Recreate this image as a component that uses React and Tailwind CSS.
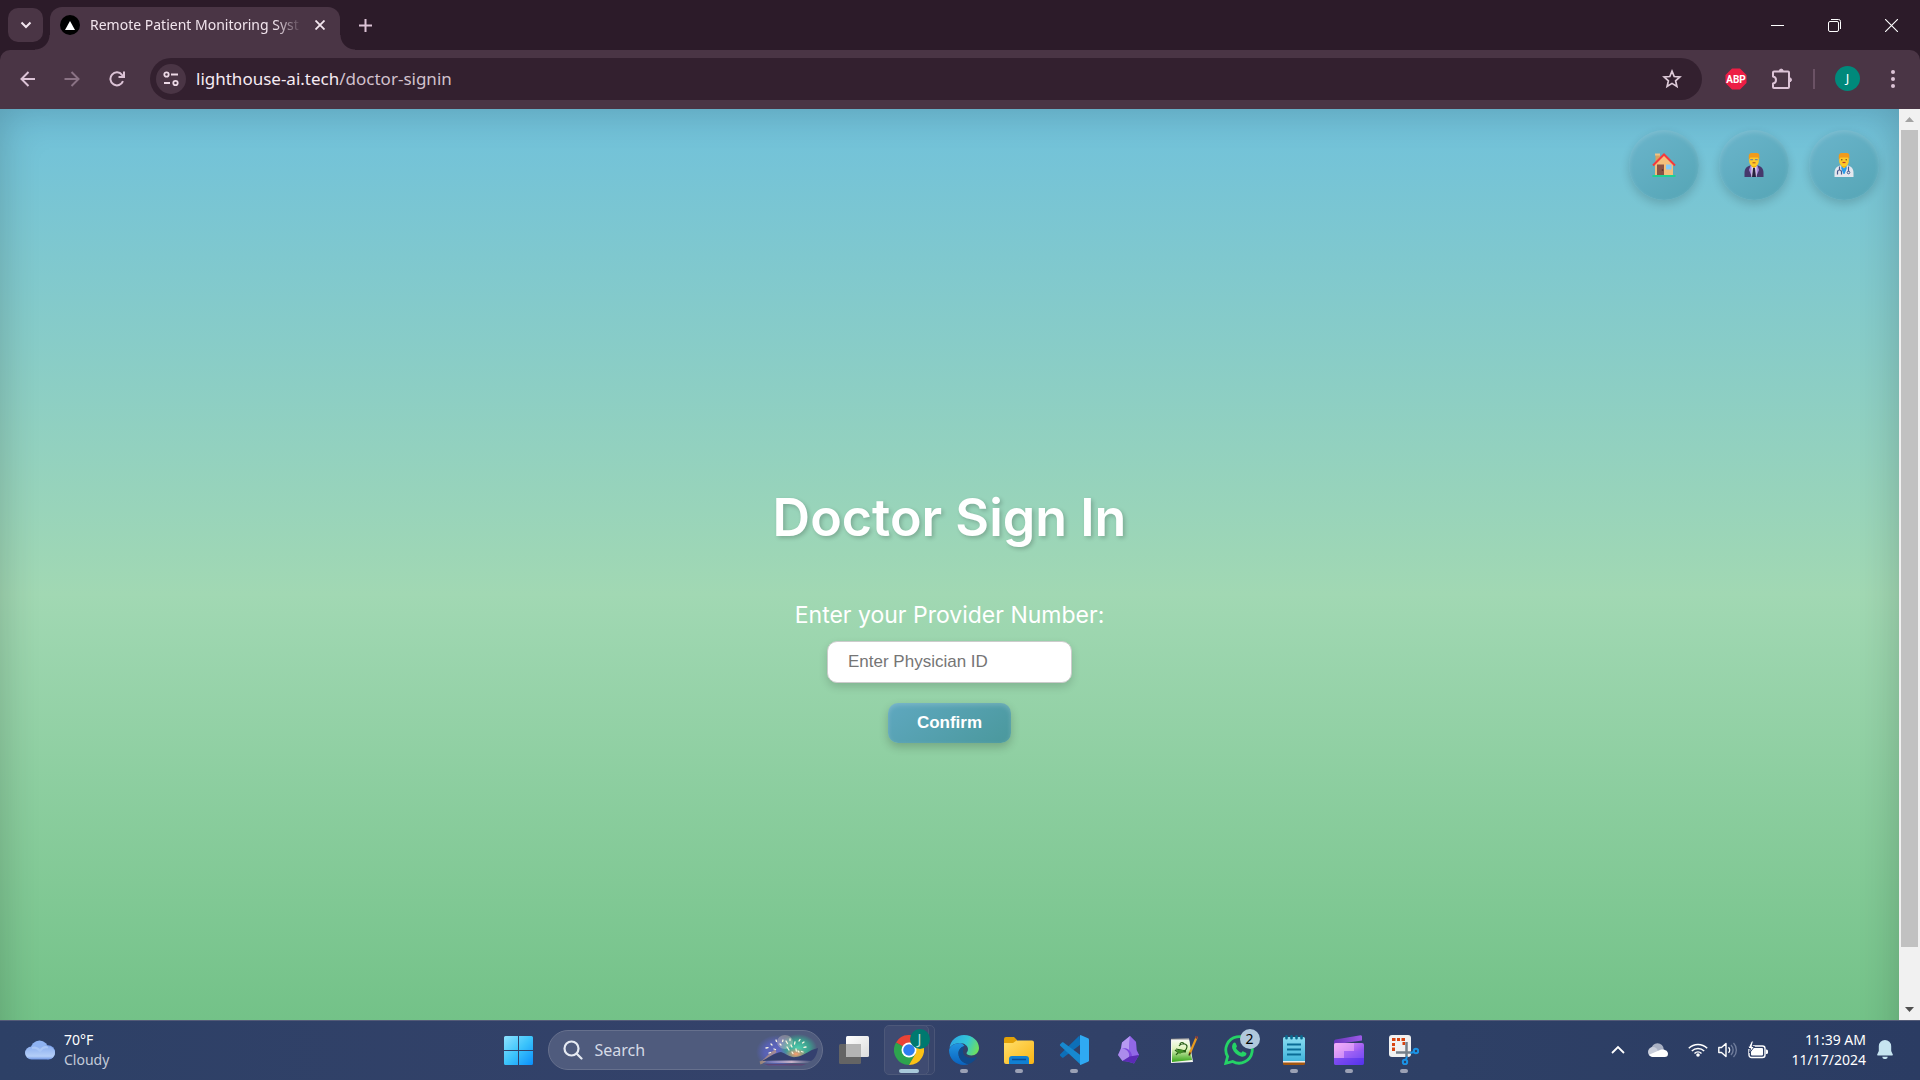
import React from "react";

const ui = "font-['Noto_Sans',sans-serif]";

/* ---------- Browser chrome icons ---------- */

const ChevronDown = () => (
  <svg width="12" height="12" viewBox="0 0 12 12" fill="none" stroke="#f3e6ef" strokeWidth="2">
    <path d="M1.500 3.500 6 8l4.500-4.500" />
  </svg>
);

const BackIcon = () => (
  <svg width="16" height="16" viewBox="0 0 16 16" fill="none" stroke="#dcc3d6" strokeWidth="2">
    <path d="M15 8H2M8.500 1 1.500 8l7 7" />
  </svg>
);

const ForwardIcon = () => (
  <svg width="16" height="16" viewBox="0 0 16 16" fill="none" stroke="#8a7284" strokeWidth="2">
    <path d="M.5 8H14M7.500 1l7 7-7 7" />
  </svg>
);

const ReloadIcon = () => (
  <svg width="16" height="16" viewBox="0 0 16 16" fill="none" stroke="#dcc3d6" strokeWidth="2">
    <path d="M14 10.200A6.500 6.500 0 1 1 13 3.800L14.600 5.600" />
    <path d="M15 .5V6H9.500" />
  </svg>
);

const SiteIcon = () => (
  <svg width="16" height="16" viewBox="0 0 16 16" fill="none" stroke="#ecd9e6" strokeWidth="1.800">
    <circle cx="3.500" cy="3.500" r="2.200" />
    <path d="M8 3.500h7M1 12h6" />
    <circle cx="12.500" cy="12" r="2.200" />
  </svg>
);

const StarIcon = () => (
  <svg width="20" height="20" viewBox="0 0 20 20" fill="none" stroke="#dfcbd9" strokeWidth="1.700">
    <path d="m10 2.200 2.200 5.300 5.700.5-4.300 3.800 1.300 5.600-4.900-3-4.900 3 1.300-5.600L2.100 8l5.700-.5z" />
  </svg>
);

const AbpIcon = () => (
  <svg width="22" height="22" viewBox="0 0 22 22">
    <path d="M7 .5h8L21.500 7v8L15 21.500H7L.5 15V7z" fill="#ed1e45" />
    <text x="11" y="14.500" textAnchor="middle" fontSize="10" fontWeight="700" fill="#fff" fontFamily="Roboto, sans-serif">
      ABP
    </text>
  </svg>
);

const PuzzleIcon = () => (
  <svg width="22" height="22" viewBox="0 0 22 22">
    <path
      d="M3 3.500h14a1 1 0 0 1 1 1V19a1 1 0 0 1-1 1H3a1 1 0 0 1-1-1v-3.500c2-.3 3-1.600 3-3.500s-1-3.200-3-3.500V4.500a1 1 0 0 1 1-1z"
      fill="none"
      stroke="#dcc3d6"
      strokeWidth="2"
      strokeLinejoin="round"
    />
    <path d="M8.300 3a1.900 1.900 0 0 1 3.800 0zM18.500 9.800a2 2 0 0 1 0 4z" fill="#dcc3d6" stroke="#dcc3d6" />
  </svg>
);

/* ---------- Page icons ---------- */

const HouseIcon = () => (
  <svg width="24" height="24" viewBox="0 0 24 24">
    <path d="M3.500 1h4.500v8H3.500z" fill="#d9a35f" />
    <path d="M3 .500h5v2H3z" fill="#f2c184" />
    <path d="M3 11 12 2l9 9v11H3z" fill="#f3bf7c" />
    <path d="M5 11.500h7V22H5z" fill="#8a5245" />
    <circle cx="10.500" cy="17" r=".8" fill="#4d2b25" />
    <path d="M14 11.500h5.500v5H14z" fill="#84cbf8" />
    <path d="M1 12.500 12 1.500l11 11" fill="none" stroke="#f5383c" strokeWidth="2" />
    <path d="M.5 22h23v2H.5z" fill="#1fd193" />
  </svg>
);

const OfficeWorkerIcon = () => (
  <svg width="24" height="24" viewBox="0 0 24 24">
    <path d="M2.500 24v-4c0-5 3-7 6-7.500h7c3 .5 6 2.500 6 7.500v4z" fill="#46386c" />
    <path d="M8.500 12.500h7L17 17l-3 7h-4l-3-7z" fill="#a383d8" />
    <path d="m9.500 12.500 2.500 3 2.500-3V24h-5z" fill="#e8e2f2" />
    <path d="M11 15h2l1 9h-4z" fill="#28213f" />
    <path d="M9.500 10.500h5v3L12 15l-2.500-1.500z" fill="#f0b400" />
    <path d="M7.200 3h9.600v5.500a4.800 4.800 0 0 1-9.600 0z" fill="#ffc928" />
    <path d="M6.800 6.500V3c0-1.800 1.200-3 3-3H15c1.500 0 2.300 1 2.300 2.500v4L16 4.500H8.500z" fill="#f09a1c" />
    <path d="M8.300 6.700h2.800M12.900 6.700h2.800" stroke="#7a8796" strokeWidth="1.300" />
    <path d="M10.500 9.800h3" stroke="#a34a28" />
  </svg>
);

const DoctorIcon = () => (
  <svg width="24" height="24" viewBox="0 0 24 24">
    <path d="M2.500 24v-4c0-5 3-7 6-7.500h7c3 .5 6 2.500 6 7.500v4z" fill="#e4e7ee" />
    <path d="m9.500 12.500 2.500 3 2.500-3 .3 3L12.500 21h-1L9.200 15.500z" fill="#2b9be8" />
    <path d="M9.500 10.500h5v3L12 15l-2.500-1.500z" fill="#f0b400" />
    <path d="M7.200 3h9.600v5.500a4.800 4.800 0 0 1-9.600 0z" fill="#ffc928" />
    <path d="M6.800 6.500V3c0-1.800 1.200-3 3-3H15c1.500 0 2.300 1 2.300 2.500v4L16 4.500H8.500z" fill="#f09a1c" />
    <circle cx="9.800" cy="6.800" r=".7" fill="#5d4326" />
    <circle cx="14.200" cy="6.800" r=".7" fill="#5d4326" />
    <path d="M10.500 9.500h3" stroke="#b33c28" strokeWidth="1.200" />
    <path d="M7.500 13.500v4M5.500 21.500v-2.500a2 2 0 0 1 4 0v2.500M16.500 13.500v5" fill="none" stroke="#48588c" strokeWidth="1.200" />
    <circle cx="16.500" cy="19.500" r="1.300" fill="none" stroke="#48588c" />
  </svg>
);

/* ---------- Taskbar icons ---------- */

const WeatherIcon = () => (
  <svg width="30" height="20" viewBox="0 0 30 20">
    <defs>
      <linearGradient id="wc" x1="0" y1="0" x2="0" y2="1">
        <stop offset="0" stopColor="#8db0f0" />
        <stop offset=".75" stopColor="#b4cef8" />
        <stop offset="1" stopColor="#6f96e4" />
      </linearGradient>
    </defs>
    <circle cx="14.500" cy="9.500" r="9" fill="#8fb3f2" />
    <circle cx="23" cy="12.200" r="7" fill="#7ea3eb" />
    <rect x="0" y="6.500" width="30" height="13" rx="6.500" fill="url(#wc)" />
    <path d="M7 8c3-1 6 .5 8 3 2-3 5-4.500 8-3.500" fill="none" stroke="#a9c6f6" strokeWidth="2" />
  </svg>
);

const StartIcon = () => (
  <svg width="29" height="29" viewBox="0 0 29 29">
    <defs>
      <linearGradient id="st" gradientUnits="userSpaceOnUse" x1="0" y1="0" x2="29" y2="29">
        <stop offset="0" stopColor="#8fe2ff" />
        <stop offset=".5" stopColor="#3cc4fb" />
        <stop offset="1" stopColor="#0a8ffb" />
      </linearGradient>
    </defs>
    <path
      d="M1.500 0H14v14H0V1.500A1.500 1.500 0 0 1 1.500 0zM15 0h12.500A1.500 1.500 0 0 1 29 1.500V14H15zM0 15h14v14H1.500A1.500 1.500 0 0 1 0 27.500zM15 15h14v12.500a1.500 1.500 0 0 1-1.500 1.500H15z"
      fill="url(#st)"
    />
  </svg>
);

const SearchIcon = () => (
  <svg width="20" height="20" viewBox="0 0 20 20" fill="none" stroke="#e6eaf2" strokeWidth="2.200">
    <circle cx="8.500" cy="8.500" r="7" />
    <path d="m13.500 13.500 5 5" strokeLinecap="round" />
  </svg>
);

const AuroraArt = () => (
  <svg width="64" height="32" viewBox="0 0 64 32">
    <defs>
      <radialGradient id="au1">
        <stop offset="0" stopColor="#6268c4" />
        <stop offset=".6" stopColor="#5a63c0" stopOpacity=".8" />
        <stop offset="1" stopColor="#5a63c0" stopOpacity="0" />
      </radialGradient>
      <radialGradient id="au2">
        <stop offset="0" stopColor="#4fcfae" />
        <stop offset=".6" stopColor="#3aa890" stopOpacity=".85" />
        <stop offset="1" stopColor="#3aa890" stopOpacity="0" />
      </radialGradient>
      <radialGradient id="au3">
        <stop offset="0" stopColor="#ff9d6e" />
        <stop offset="1" stopColor="#e98b5f" stopOpacity="0" />
      </radialGradient>
      <linearGradient id="au4" x1="0" y1="0" x2="1" y2="0">
        <stop offset="0" stopColor="#b9b0cf" stopOpacity="0" />
        <stop offset=".6" stopColor="#c9b3c9" />
        <stop offset="1" stopColor="#9a93bb" stopOpacity="0" />
      </linearGradient>
    </defs>
    <ellipse cx="21" cy="18" rx="21" ry="17" fill="url(#au1)" />
    <ellipse cx="42" cy="14" rx="19" ry="14" fill="url(#au2)" />
    <ellipse cx="29" cy="8" rx="8" ry="7" fill="#f1e6d2" opacity=".3" />
    <ellipse cx="40" cy="20" rx="11" ry="6" fill="url(#au3)" />
    <path d="M4 29c7-2 8-9 16-12" stroke="#d9a774" strokeWidth="3" fill="none" opacity=".55" />
    <path d="M6 27c6-3 12-8 19-9 6 2 9 6 15 5 8-1 13-7 22-9-1 6-3 11-7 13z" fill="#34406f" />
    <path d="M8 26.500h48l-4 2.500H5z" fill="url(#au4)" />
    <path d="M8 30h42l-4 1.500H12z" fill="#5c4674" />
    <g stroke="#fbf6e2" strokeWidth="1.300" strokeLinecap="round">
      <path d="m10 14 2-.3M15 10l1 1M20 6l.5 1.500M13 19l1.500-.5M18 15l1.500.5M24 10l1 1M27 6l-.5 1.500" />
      <path d="m30 7 1.500 2.500M34 5v1.500M31 13l2 3M35 11l1 2M39 8l-.5 2M44 5.500l-1 1.500M48 8l-1.500 1M50 13l-2 .3M47 18l-1.500-.5M40 15l.3 2M43 18l-1-1M36 18l1 1.500" />
    </g>
  </svg>
);

const TaskViewIcon = () => (
  <svg width="30" height="28" viewBox="0 0 30 28">
    <defs>
      <linearGradient id="tv" x1="0" y1="0" x2="1" y2="1">
        <stop offset="0" stopColor="#fff" />
        <stop offset="1" stopColor="#dcdcdc" />
      </linearGradient>
    </defs>
    <rect x="0" y="8" width="22" height="20" rx="1.500" fill="#646464" />
    <rect x="7" y="0" width="23" height="21" rx="1.500" fill="url(#tv)" />
    <path d="M7 8h15v13H8.500A1.500 1.500 0 0 1 7 19.500z" fill="#b4b4b4" />
  </svg>
);

const ChromeIcon = () => (
  <svg width="30" height="30" viewBox="0 0 48 48">
    <path d="M24 24 3.200 12A24 24 0 0 1 44.800 12z" fill="#ea4335" />
    <path d="M24 24 3.200 12A24 24 0 0 0 24 48l10.400-18z" fill="#2da44e" />
    <path d="M24 12h20.800A24 24 0 0 1 24 48l10.400-18z" fill="#fbc116" />
    <circle cx="24" cy="24" r="12" fill="#fff" />
    <circle cx="24" cy="24" r="9.300" fill="#2f7df0" />
  </svg>
);

const EdgeIcon = () => (
  <svg width="30" height="30" viewBox="0 0 30 30">
    <defs>
      <linearGradient id="ed1" x1="0" y1=".3" x2="1" y2=".6">
        <stop offset="0" stopColor="#2ba5e6" />
        <stop offset=".55" stopColor="#33c6d6" />
        <stop offset="1" stopColor="#6fe05c" />
      </linearGradient>
      <linearGradient id="ed2" x1="0" y1="0" x2="0" y2="1">
        <stop offset="0" stopColor="#2196e3" />
        <stop offset="1" stopColor="#0a62bd" />
      </linearGradient>
    </defs>
    <path d="M.5 13C1.500 5.500 7.500 0 15 0c8.500 0 15 6 15 13 0 4.500-3.500 7.500-7.500 7.500-3 0-5-1.200-5-2.300 0-1 1.500-1.500 1.500-4.200 0-3-3.500-6-8-6-5 0-9 2.500-10.500 5z" fill="url(#ed1)" />
    <path d="M11 8C5.500 8 1 11 0 15c0 8.500 6.500 15 15 15 1.500 0 3-.2 4.500-.8C14 28 9.500 24 9.500 18.500c0-4 2.500-6.500 6-7.500C14 9 12.500 8 11 8z" fill="url(#ed2)" />
    <path d="M15.500 11c-3.500 1-6 3.500-6 7.500C9.500 24.500 14 28.500 19.500 29c3.500-1 6.500-3.500 8-6.500.3-.6-.2-.8-.8-.5-1.500.7-3 1-4.500 1-5 0-8.200-3-8.200-6.500 0-2.500 1.200-4 1.500-5.500z" fill="#114a8b" />
  </svg>
);

const FolderIcon = () => (
  <svg width="30" height="27" viewBox="0 0 30 27">
    <defs>
      <linearGradient id="fo" x1="0" y1="0" x2="1" y2="1">
        <stop offset="0" stopColor="#ffdf6b" />
        <stop offset="1" stopColor="#fbb514" />
      </linearGradient>
    </defs>
    <path d="M0 2a2 2 0 0 1 2-2h8l3 3v6H0z" fill="#e2a107" />
    <path d="M0 6h9l3.500-2.500H28a2 2 0 0 1 2 2V25a2 2 0 0 1-2 2H2a2 2 0 0 1-2-2z" fill="url(#fo)" />
    <path d="M5 27v-5a3 3 0 0 1 3-3h14a3 3 0 0 1 3 3v5z" fill="#1180d2" />
    <path d="M8 22.500h14" stroke="#0a4d96" strokeWidth="1.500" />
  </svg>
);

const VsCodeIcon = () => (
  <svg width="30" height="30" viewBox="0 0 30 30">
    <path d="M20.500.5 1.200 19.300a1 1 0 0 0 0 1.500L3 22.500c.5.400 1 .4 1.500.1L21.500 9.500z" fill="#0d6fb8" />
    <path d="M21.500 29.500 1.200 10.700a1 1 0 0 1 0-1.500L3 7.500c.5-.4 1-.4 1.500-.1L22 20.500z" fill="#1788cf" />
    <path d="M21.500 30c-.5-.2-.5-.3-.5-1V1c0-.7 0-.8.500-1L29 3.300a1.700 1.700 0 0 1 1 1.500v20.400a1.700 1.700 0 0 1-1 1.500z" fill="#2fa9f2" />
  </svg>
);

const ObsidianIcon = () => (
  <svg width="22" height="28" viewBox="0 0 22 28">
    <path d="M12 0 4 6.500 3 12l-3 7 4.500 6c4 0 7 1 11.500 2.500L21 19l-2.500-5-.5-8z" fill="#7d48dd" />
    <path d="M12 0 4 6.500 3 13c3-1 6-1 8 1z" fill="#b79af2" />
    <path d="m12 0-1 14c2 2 3 4 3 7l7-2-2.500-5-.5-8z" fill="#9168e6" />
    <path d="M0 19 3 12.500c5 0 9 3 8 9l-6.500 3.500z" fill="#d2c2f8" opacity=".55" />
    <path d="m4.500 25 7-4.500 9.500-1.500-5 8.500C12 26 8.500 25 4.500 25z" fill="#5b2bb5" />
  </svg>
);

const NotepadPlusIcon = () => (
  <svg width="28" height="28" viewBox="0 0 28 28">
    <defs>
      <linearGradient id="np" x1="0" y1="0" x2="0" y2="1">
        <stop offset="0" stopColor="#f6fbef" />
        <stop offset=".4" stopColor="#e0f3bd" />
        <stop offset="1" stopColor="#35a516" />
      </linearGradient>
    </defs>
    <path d="m1 3 18-.500L23 26 1 27z" fill="#f5f5f0" />
    <path d="m2 5 17-1 3 20-20 2z" fill="url(#np)" />
    <path d="M1.500 3h17" stroke="#6d6d6d" strokeWidth="1.500" strokeDasharray="1 1" />
    <path d="M9 10c2-3 7-3 8 0 0 3-2 5-4 6-3 1-6 0-8-2m1 5c2-3 6-4 10-3M10 8.500a2 2 0 0 1 4 0M6 13l10 2" fill="none" stroke="#245c14" strokeWidth="1.200" />
    <path d="M6 15c3-2 6-1 8 0l-4 3z" fill="#418f26" />
    <path d="M27 .5 19.500 18" stroke="#e79a1f" strokeWidth="2.200" />
    <path d="m20.200 16.500-1.200 3" stroke="#3d2b17" strokeWidth="1.500" />
    <path d="m26 2.500 1.200-2.500" stroke="#7c3442" strokeWidth="2" />
  </svg>
);

const WhatsAppIcon = () => (
  <svg width="30" height="30" viewBox="0 0 30 30">
    <path d="M1.800 28.300 3.600 21.500A13.200 13.200 0 1 1 8.700 26.500z" fill="none" stroke="#25d366" strokeWidth="2.800" />
    <path
      d="M9.500 8c.6-.7 1.800-.7 2.200.2l1.200 2.700c.2.600-.3 1.300-1 2.100 1.200 2.200 3 3.800 5.400 4.800.8-1 1.300-1.700 2-1.400l2.700 1.300c.7.400.5 1.700-.1 2.500-1 1.300-3 1.800-4.800 1.200-4.300-1.300-7.300-4.300-8.800-8C7.700 11.300 8.300 9.300 9.500 8z"
      fill="#25d366"
    />
  </svg>
);

const NotepadIcon = () => (
  <svg width="22" height="30" viewBox="0 0 22 30">
    <defs>
      <linearGradient id="no" x1="0" y1="0" x2="0" y2="1">
        <stop offset="0" stopColor="#8adcf0" />
        <stop offset="1" stopColor="#41b5dc" />
      </linearGradient>
    </defs>
    <path d="M0 26h22v2.500a1.500 1.500 0 0 1-1.500 1.500h-19A1.500 1.500 0 0 1 0 28.500z" fill="#a3560f" />
    <path d="M0 25h22v2.500H0z" fill="#ececec" />
    <path d="M0 3.500A1.500 1.500 0 0 1 1.500 2h19A1.500 1.500 0 0 1 22 3.500V26H0z" fill="url(#no)" />
    <path d="M4 9.500h14M4 14.500h14M4 19.500h14" stroke="#0a6c96" strokeWidth="1.800" />
    <path d="M3.500 1.300v2M8.500 1.300v2M13.500 1.300v2M18.500 1.300v2" stroke="#0b6a8f" strokeWidth="2.600" strokeLinecap="round" />
  </svg>
);

const ClipchampIcon = () => (
  <svg width="30" height="30" viewBox="0 0 30 30">
    <defs>
      <linearGradient id="cc" x1="0" y1="0" x2="1" y2="1">
        <stop offset="0" stopColor="#f6a8f8" />
        <stop offset=".5" stopColor="#a965f2" />
        <stop offset="1" stopColor="#4a30ea" />
      </linearGradient>
      <linearGradient id="cd" x1="0" y1="0" x2="1" y2="0">
        <stop offset="0" stopColor="#6a35bb" />
        <stop offset="1" stopColor="#9d5be8" />
      </linearGradient>
    </defs>
    <path d="M0 6.500A2 2 0 0 1 1.500 4.500L26.500.2A1.500 1.500 0 0 1 28 1.500V5.500L0 9.500z" fill="url(#cd)" />
    <rect x="0" y="8" width="30" height="22" rx="2" fill="url(#cc)" />
    <path d="M0 10a2 2 0 0 1 2-2h18v8H0z" fill="#f3b5fa" opacity=".55" />
    <path d="M0 16h10v7H0z" fill="#efb4fb" opacity=".5" />
    <path d="M10 16h20v7H10z" fill="#8e5cf8" opacity=".45" />
    <path d="M0 23h30v5a2 2 0 0 1-2 2H2a2 2 0 0 1-2-2z" fill="#5a36ee" opacity=".6" />
  </svg>
);

const SnipIcon = () => (
  <svg width="30" height="30" viewBox="0 0 30 30">
    <rect x="0" y="0" width="22" height="22" rx="3" fill="#f1f1f1" />
    <path
      d="M3 3h3.500v3H3zM8 3h3v3H8zM12.500 3H16v3h-3.500zM3 8h3v3H3zM3 12.500h3V16H3zM13.500 7H16v3h-2.500z"
      fill="#d8430f"
    />
    <path d="M17.500 7v15M7 17.500h15" stroke="#75808a" strokeWidth="2.500" />
    <circle cx="16" cy="27" r="2.200" fill="none" stroke="#1a93e6" strokeWidth="2" />
    <circle cx="27" cy="16" r="2.200" fill="none" stroke="#1a93e6" strokeWidth="2" />
    <path d="m17 24.500 1-3M24.800 17l-3.300 1" stroke="#1a93e6" strokeWidth="2" />
  </svg>
);

const TrayChevron = () => (
  <svg width="14" height="9" viewBox="0 0 14 9" fill="none" stroke="#fff" strokeWidth="1.800">
    <path d="M1 8l6-6 6 6" />
  </svg>
);

const CloudIcon = () => (
  <svg width="20" height="14" viewBox="0 0 20 14">
    <circle cx="9.500" cy="6.500" r="6.200" fill="#a9b1c3" />
    <circle cx="5" cy="9" r="5" fill="#c9cedb" />
    <path d="M5 14a4.500 4.500 0 0 1-4-2.200L12.500 6.700c3-1 7.500.5 7.500 4A3.300 3.300 0 0 1 16.700 14z" fill="#fff" />
  </svg>
);

const WifiIcon = () => (
  <svg width="20" height="15" viewBox="0 0 20 15" fill="none" stroke="#fff" strokeWidth="1.500">
    <path d="M.8 6.200a13 13 0 0 1 18.400 0M3.800 9a9 9 0 0 1 12.400 0M6.500 11.500a5 5 0 0 1 7 0" />
    <circle cx="10" cy="13" r="1.800" fill="#fff" stroke="none" />
  </svg>
);

const VolumeIcon = () => (
  <svg width="20" height="16" viewBox="0 0 20 16" fill="none" stroke="#fff" strokeWidth="1.400">
    <path d="M.8 5.500h2.700L8 1.500v13l-4.500-4H.8z" strokeLinejoin="round" />
    <path d="M10.500 5.200a4 4 0 0 1 0 5.600" />
    <path d="M13 3a7 7 0 0 1 0 10M15.500 1a10 10 0 0 1 0 14" stroke="#6f7c9b" />
  </svg>
);

const BatteryIcon = () => (
  <svg width="20" height="18" viewBox="0 0 20 18">
    <rect x="1" y="5" width="16" height="11.500" rx="2.500" fill="none" stroke="#fff" strokeWidth="1.400" />
    <rect x="3" y="7" width="12" height="7.500" rx="1" fill="#fff" />
    <path d="M18 8.500h.5a1.500 1.500 0 0 1 1.500 1.500v1.500a1.500 1.500 0 0 1-1.500 1.500H18z" fill="#fff" />
    <path d="M3.500 0 0 7.500h2.500L1.500 12l5-6.500H4L5.500 0z" fill="#fff" stroke="#2d3e66" />
  </svg>
);

const BellIcon = () => (
  <svg width="16" height="19" viewBox="0 0 16 19">
    <path d="M8 0a6.200 6.200 0 0 1 6.200 6.200V11l1.600 3.500c.2.500 0 1-.6 1H.8c-.6 0-.8-.5-.6-1L1.800 11V6.200A6.200 6.200 0 0 1 8 0zM5.300 16.800h5.400a2.700 2.300 0 0 1-5.400 0z" fill="#c6e4f0" />
  </svg>
);

/* ---------- Parts ---------- */

function TabStrip() {
  return (
    <header className="flex h-[50px] shrink-0 items-stretch bg-[#2c1b29]">
      <button aria-label="Search tabs" className="ml-2 mt-2 flex h-[34px] w-[35px] items-center justify-center rounded-[10px] bg-[#4a3545]">
        <ChevronDown />
      </button>
      <div className="relative ml-[7px] mt-[7px] flex w-[290px] items-center rounded-t-[12px] bg-[#4a3545] pb-[7px] pl-[10px]">
        <span className="absolute -left-[15px] bottom-0 size-[15px] bg-[radial-gradient(circle_at_0_0,transparent_14px,#4a3545_15px)]" />
        <span className="absolute -right-[15px] bottom-0 size-[15px] bg-[radial-gradient(circle_at_100%_0,transparent_14px,#4a3545_15px)]" />
        <span className="flex size-5 shrink-0 items-center justify-center rounded-full bg-black">
          <svg width="10" height="9" viewBox="0 0 10 9">
            <path d="M5 0l5 9H0z" fill="#fff" />
          </svg>
        </span>
        <span className="ml-[10px] w-[210px] whitespace-nowrap text-sm text-[#f1e4ed] [mask-image:linear-gradient(to_right,black_185px,transparent_212px)]">
          Remote Patient Monitoring Syst
        </span>
        <button aria-label="Close tab" className="ml-[15px]">
          <svg width="10" height="10" viewBox="0 0 10 10" stroke="#f3e6ef" strokeWidth="1.800">
            <path d="M.5.5l9 9M9.500.5l-9 9" />
          </svg>
        </button>
      </div>
      <button aria-label="New tab" className="ml-[19px]">
        <svg width="13" height="13" viewBox="0 0 13 13" stroke="#dcc3d6" strokeWidth="2">
          <path d="M6.500 0v13M0 6.500h13" />
        </svg>
      </button>
      <div className="ml-auto flex items-center">
        <button aria-label="Minimize" className="flex w-[57px] justify-center">
          <svg width="13" height="13" viewBox="0 0 13 13" stroke="#fff">
            <path d="M0 6.500h13" />
          </svg>
        </button>
        <button aria-label="Restore" className="flex w-[57px] justify-center">
          <svg width="13" height="13" viewBox="0 0 13 13" fill="none" stroke="#fff">
            <rect x=".5" y="2.500" width="10" height="10" rx="1.500" />
            <path d="M3 .5h7.500a2 2 0 0 1 2 2V10" />
          </svg>
        </button>
        <button aria-label="Close" className="flex w-[57px] justify-center">
          <svg width="13" height="13" viewBox="0 0 13 13" stroke="#fff" strokeWidth="1.100">
            <path d="M0 0l13 13M13 0 0 13" />
          </svg>
        </button>
      </div>
    </header>
  );
}

function Toolbar() {
  return (
    <div className="shrink-0 bg-[#2c1b29]">
      <div className="flex h-[59px] items-center rounded-t-[10px] bg-[#4a3545] pb-[2px] pl-5 pr-6">
        <button aria-label="Back"><BackIcon /></button>
        <button aria-label="Forward" className="ml-7"><ForwardIcon /></button>
        <button aria-label="Reload" className="ml-[29px]"><ReloadIcon /></button>
        <div className="ml-[25px] flex h-[42px] flex-1 items-center rounded-full bg-[#33202f] pl-[6px] pr-5">
          <button aria-label="Site information" className="flex size-[30px] items-center justify-center rounded-full bg-[#4a3545]">
            <SiteIcon />
          </button>
          <span className="ml-[10px] flex-1 text-[17px] text-[#d2c1cd]">
            <span className="text-[#f6ebf3]">lighthouse-ai.tech</span>/doctor-signin
          </span>
          <button aria-label="Bookmark"><StarIcon /></button>
        </div>
        <button aria-label="Adblock Plus" className="ml-[23px]"><AbpIcon /></button>
        <button aria-label="Extensions" className="ml-6"><PuzzleIcon /></button>
        <span className="ml-5 h-5 w-[2px] bg-[#6b5265]" />
        <button aria-label="Profile" className="ml-5 flex size-[25px] items-center justify-center rounded-full bg-[#00897b] text-[13px] text-white">
          J
        </button>
        <button aria-label="Menu" className="ml-[30px]">
          <svg width="6" height="18" viewBox="0 0 6 18" fill="#dcc3d6">
            <circle cx="3" cy="2" r="2" />
            <circle cx="3" cy="9" r="2" />
            <circle cx="3" cy="16" r="2" />
          </svg>
        </button>
      </div>
    </div>
  );
}

const navItems = [
  { label: "Home", Icon: HouseIcon },
  { label: "Patient", Icon: OfficeWorkerIcon },
  { label: "Doctor", Icon: DoctorIcon },
];

function SignInPage() {
  return (
    <main className="relative flex min-h-[calc(100%+59px)] flex-col bg-[linear-gradient(to_bottom,#70c1db,#a1d8b3_50%,#6dbf82)] shadow-[inset_0_0_40px_rgba(0,0,0,0.2)]">
      <nav className="absolute right-5 top-[21px] flex gap-5">
        {navItems.map(({ label, Icon }) => (
          <button
            key={label}
            aria-label={label}
            className="flex size-[70px] items-center justify-center rounded-full bg-[linear-gradient(145deg,#6bb5cc,#55a5b5)] shadow-[0_4px_10px_rgba(0,0,0,0.16),inset_0_2px_5px_rgba(255,255,255,0.16)]"
          >
            <Icon />
          </button>
        ))}
      </nav>
      <form className="flex flex-1 flex-col items-center justify-center pt-[34px]" onSubmit={(e) => e.preventDefault()}>
        <h1 className="mb-10 font-['Inter',sans-serif] text-[52px] font-semibold leading-[78px] text-white [text-shadow:2px_2px_4px_rgba(0,0,0,0.2)]">
          Doctor Sign In
        </h1>
        <label htmlFor="physician" className="mb-2 font-['Inter',sans-serif] text-[23px] leading-9 text-white">
          Enter your Provider Number:
        </label>
        <input
          id="physician"
          type="text"
          placeholder="Enter Physician ID"
          className="h-[42px] w-[245px] rounded-[10px] border border-[#ccc] bg-white px-5 font-['Liberation_Sans',sans-serif] text-[17px] text-[#333] shadow-[0_4px_8px_rgba(0,0,0,0.15)] outline-none placeholder:text-[#757575]"
        />
        <button
          type="submit"
          className="mt-5 h-10 w-[123px] rounded-[10px] bg-[linear-gradient(145deg,#5fa8c0,#4a989c)] font-['Liberation_Sans',sans-serif] text-[17px] font-bold text-white shadow-[0_4px_10px_rgba(0,0,0,0.2),inset_0_2px_5px_rgba(255,255,255,0.2)]"
        >
          Confirm
        </button>
      </form>
    </main>
  );
}

function Scrollbar() {
  return (
    <div className="flex w-[21px] shrink-0 flex-col items-center bg-[#f1f1f1]">
      <div className="flex h-[21px] items-center">
        <svg width="9" height="5" viewBox="0 0 9 5"><path d="M4.500 0 9 5H0z" fill="#a3a3a3" /></svg>
      </div>
      <div className="flex w-[17px] flex-1 flex-col">
        <div className="h-[94%] bg-[#c1c1c1]" />
      </div>
      <div className="flex h-[21px] items-center">
        <svg width="9" height="5" viewBox="0 0 9 5"><path d="M4.500 5 9 0H0z" fill="#505050" /></svg>
      </div>
    </div>
  );
}

const apps = [
  { label: "Task View", Icon: TaskViewIcon },
  { label: "Chrome", Icon: ChromeIcon, running: true, active: true, badge: "J" },
  { label: "Edge", Icon: EdgeIcon, running: true },
  { label: "File Explorer", Icon: FolderIcon, running: true },
  { label: "Visual Studio Code", Icon: VsCodeIcon, running: true },
  { label: "Obsidian", Icon: ObsidianIcon },
  { label: "Notepad++", Icon: NotepadPlusIcon },
  { label: "WhatsApp", Icon: WhatsAppIcon, badge: "2" },
  { label: "Notepad", Icon: NotepadIcon, running: true },
  { label: "Clipchamp", Icon: ClipchampIcon, running: true },
  { label: "Snipping Tool", Icon: SnipIcon, running: true },
];

function AppButton({ label, Icon, running, active, badge }) {
  return (
    <button aria-label={label} className="relative flex h-full w-[55px] items-center justify-center">
      {active && (
        <>
          <span className="absolute left-[8px] top-1 h-[50px] w-[45px] rounded-[5px] border border-[#4a5577] bg-[#38456b]" />
          <span className="absolute left-[2px] top-1 h-[50px] w-[45px] rounded-[5px] border border-[#4d5879] bg-[#3f4b71]" />
        </>
      )}
      <span className="relative"><Icon /></span>
      {badge === "J" && (
        <span className="absolute left-[28px] top-2 flex size-5 items-center justify-center rounded-full bg-[#00796f] text-sm text-[#bfe0dc]">J</span>
      )}
      {badge === "2" && (
        <span className="absolute left-[28px] top-2 flex size-5 items-center justify-center rounded-full bg-[#b0c8dc] text-sm text-black">2</span>
      )}
      {running && (
        <span className={active ? "absolute bottom-[6px] h-1 w-5 rounded-full bg-[#a9c9d9]" : "absolute bottom-[6px] h-1 w-2 rounded-full bg-[#9ba1b5]"} />
      )}
    </button>
  );
}

function Taskbar() {
  return (
    <footer className="grid h-[60px] shrink-0 grid-cols-[1fr_auto_1fr] border-t border-[#545b78] bg-[linear-gradient(to_right,#2d4066,#34426a_40%,#2e4066_75%,#2b3c63)] text-white">
      <div className="flex items-center gap-[9px] pb-[2px] pl-[25px]">
        <WeatherIcon />
        <div className="text-sm leading-5">
          <div>70°F</div>
          <div className="text-[#c3cad8]">Cloudy</div>
        </div>
      </div>
      <div className="flex items-center pb-[1px] pl-[2px]">
        <button aria-label="Start" className="flex w-[55px] justify-center"><StartIcon /></button>
        <button className="ml-[2px] mr-1 flex h-10 w-[275px] items-center rounded-full border border-[#66708d] bg-[#4f5b7d] pl-[14px] pr-[2px] text-left">
          <SearchIcon />
          <span className="ml-3 flex-1 text-base text-[#d5dae6]">Search</span>
          <AuroraArt />
        </button>
        {apps.map((app) => (
          <AppButton key={app.label} {...app} />
        ))}
      </div>
      <div className="flex items-center justify-end pb-[2px] pr-[27px]">
        <TrayChevron />
        <span className="ml-[23px]"><CloudIcon /></span>
        <span className="ml-5"><WifiIcon /></span>
        <span className="ml-[10px]"><VolumeIcon /></span>
        <span className="ml-[10px]"><BatteryIcon /></span>
        <div className="ml-6 text-right text-sm leading-5">
          <div>11:39 AM</div>
          <div>11/17/2024</div>
        </div>
        <span className="ml-[11px]"><BellIcon /></span>
      </div>
    </footer>
  );
}

export default function App() {
  return (
    <div className={`flex h-screen flex-col overflow-hidden ${ui} [&_svg]:block`}>
      <TabStrip />
      <Toolbar />
      <div className="flex min-h-0 flex-1">
        <div className="h-full flex-1 overflow-hidden">
          <SignInPage />
        </div>
        <Scrollbar />
      </div>
      <Taskbar />
    </div>
  );
}
